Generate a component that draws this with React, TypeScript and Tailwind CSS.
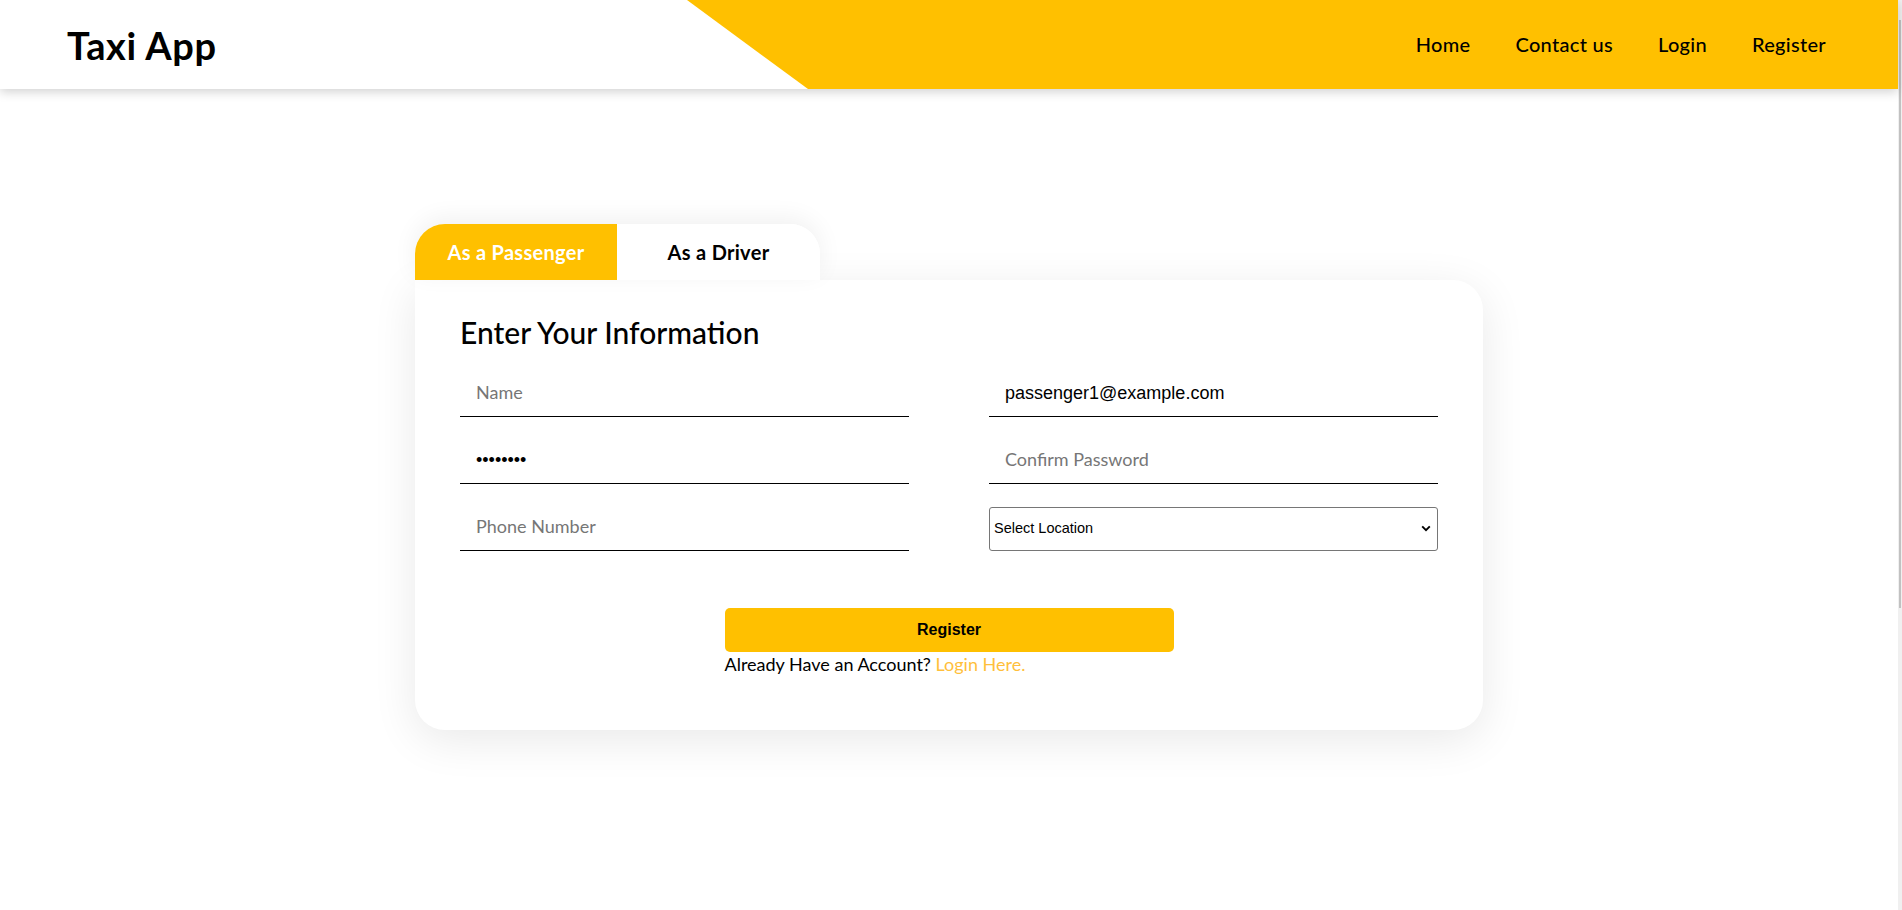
import React from 'react';

const navLinks = ['Home', 'Contact us', 'Login', 'Register'];

const Header: React.FC = () => (
  <header className="relative z-20 flex h-[89px] bg-white shadow-[0_3px_10px_rgba(0,0,0,0.18)]">
    <div className="flex w-[687px] shrink-0 items-center pl-[67px]">
      <h1 className="text-[38px] font-bold leading-none tracking-[0.6px] text-black">Taxi App</h1>
    </div>
    <nav className="flex flex-1 items-center justify-end gap-[45px] bg-[#ffc000] pb-[2px] pr-[72px] [clip-path:polygon(0_0,100%_0,100%_100%,121px_100%)]">
      {navLinks.map((label) => (
        <a key={label} href="#" className="text-[20px] font-medium tracking-[0.3px] text-black">
          {label}
        </a>
      ))}
    </nav>
  </header>
);

const RegisterCard: React.FC = () => {
  const inputCls =
    "h-[46px] w-full border-b border-black bg-transparent pl-[16px] font-['Liberation_Sans'] text-[18px] text-black outline-none placeholder:font-['Lato'] placeholder:text-[#767676]";

  return (
    <div className="mx-auto mt-[135px] w-[1068px]">
      <div className="relative z-10 flex w-[405px] rounded-t-[30px] shadow-[0_-6px_24px_rgba(0,0,0,0.06)]">
        <button className="flex h-[56px] w-[202px] items-center justify-center rounded-tl-[30px] bg-[#ffc000] text-[20px] font-bold tracking-[0.3px] text-white">
          As a Passenger
        </button>
        <button className="flex h-[56px] w-[203px] items-center justify-center rounded-tr-[30px] bg-white text-[20px] font-bold tracking-[0.3px] text-black">
          As a Driver
        </button>
      </div>

      <div className="rounded-[30px] rounded-tl-none bg-white px-[45px] pb-[54px] pt-[34px] shadow-[0_10px_45px_rgba(0,0,0,0.09)]">
        <h2 className="text-[30px] font-medium leading-[36px] text-black">Enter Your Information</h2>

        <div className="mt-[21px] grid grid-cols-2 gap-x-[80px] gap-y-[21px]">
          <input className={inputCls} placeholder="Name" />
          <input className={inputCls} defaultValue="passenger1@example.com" />
          <input className={inputCls} type="password" defaultValue="12345678" />
          <input className={inputCls} type="password" placeholder="Confirm Password" />
          <input className={inputCls} placeholder="Phone Number" />
          <div className="flex items-end">
            <div className="relative w-full">
              <select className="h-[44px] w-full appearance-none rounded-[3px] border border-[#767676] bg-white pl-[4px] font-['Liberation_Sans'] text-[14.5px] text-black">
                <option>Select Location</option>
              </select>
              <svg
                className="pointer-events-none absolute right-[7px] top-[18px]"
                width="10"
                height="7"
                viewBox="0 0 10 7"
                fill="none"
              >
                <path d="M1.2 1.4L5 5.2L8.8 1.4" stroke="#000" strokeWidth="1.9" />
              </svg>
            </div>
          </div>
        </div>

        <div className="mt-[57px] flex justify-center">
          <div className="w-[449px]">
            <button className="h-[44px] w-full rounded-[5px] bg-[#ffc000] font-['Liberation_Sans'] text-[16px] font-bold text-black">
              Register
            </button>
            <p className="text-[18px] leading-[24px] text-black">
              Already Have an Account? <a href="#" className="text-[#ffbf3c]">Login Here.</a>
            </p>
          </div>
        </div>
      </div>
    </div>
  );
};

export default function App() {
  return (
    <div className="flex min-h-screen bg-white font-['Lato',sans-serif]">
      <div className="flex-1">
        <Header />
        <RegisterCard />
      </div>
      <aside className="w-[4px] shrink-0 bg-[#f0f0f0]">
        <div className="ml-[1px] mt-[20px] h-[588px] w-[2px] bg-[#c1c1c1]" />
      </aside>
    </div>
  );
}
